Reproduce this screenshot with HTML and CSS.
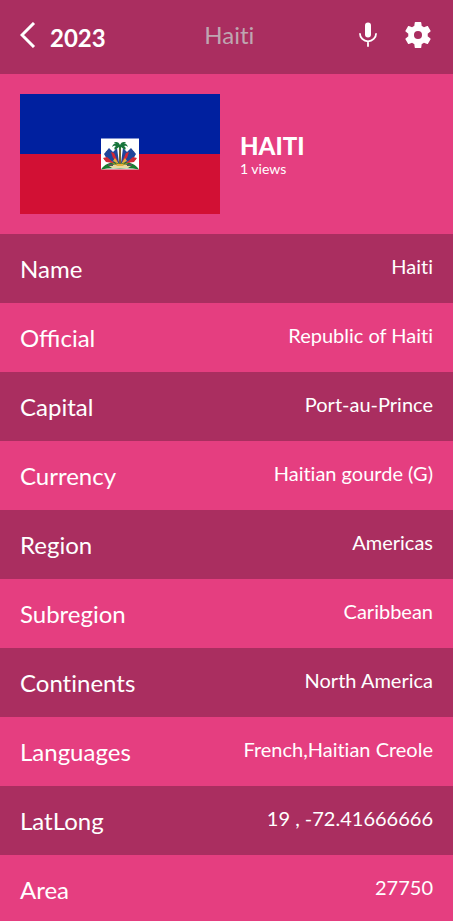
FILE: index.html
```html
<!DOCTYPE html>
<html lang="en">
<head>
<meta charset="utf-8">
<meta name="viewport" content="width=device-width, initial-scale=1">
<title>Haiti</title>
<link rel="stylesheet" href="styles.css">
</head>
<body>
<header class="bar">
  <button class="icon-button" type="button" aria-label="Back">
    <svg class="back" viewBox="0 0 16 26" aria-hidden="true"><path d="M14 1 2 13l12 12"/></svg>
  </button>
  <span class="year">2023</span>
  <input class="search" type="text" placeholder="Haiti" aria-label="Search country">
  <button class="icon-button" type="button" aria-label="Voice search">
    <svg class="mic" viewBox="0 0 18 26" aria-hidden="true"><rect x="6" y="0.5" width="6" height="15" rx="3"/><path d="M0.9 11.2a8.1 8.1 0 0 0 16.2 0M9 19.2v5.5"/></svg>
  </button>
  <button class="icon-button" type="button" aria-label="Settings">
    <svg class="gear" viewBox="2 2 20 20" aria-hidden="true"><path fill-rule="evenodd" d="M19.43 12.98c.04-.32.07-.64.07-.98s-.03-.66-.07-.98l2.11-1.65c.19-.15.24-.42.12-.64l-2-3.46c-.12-.22-.39-.3-.61-.22l-2.49 1c-.52-.4-1.08-.73-1.69-.98l-.38-2.65C14.46 2.18 14.25 2 14 2h-4c-.25 0-.46.18-.49.42l-.38 2.65c-.61.25-1.17.59-1.69.98l-2.49-1c-.23-.09-.49 0-.61.22l-2 3.46c-.13.22-.07.49.12.64l2.11 1.65c-.04.32-.07.65-.07.98s.03.66.07.98l-2.11 1.65c-.19.15-.24.42-.12.64l2 3.46c.12.22.39.3.61.22l2.49-1c.52.4 1.08.73 1.69.98l.38 2.65c.03.24.24.42.49.42h4c.25 0 .46-.18.49-.42l.38-2.65c.61-.25 1.17-.59 1.69-.98l2.49 1c.23.09.49 0 .61-.22l2-3.46c.12-.22.07-.49-.12-.64zM12 15.1a3.1 3.1 0 1 1 0-6.2 3.1 3.1 0 0 1 0 6.2z"/></svg>
  </button>
</header>
<main>
  <section class="hero">
    <svg class="flag" viewBox="0 0 200 120" role="img" aria-label="Flag of Haiti">
      <path fill="#00209f" d="M0 0h200v60H0z"/>
      <path fill="#d21034" d="M0 60h200v60H0z"/>
      <path fill="#fff" d="M81 44.500h38v31H81z"/>
      <path fill="#197b30" d="M81 75.500c3-5 9-8 19-8s16 3 19 8q-9-2-19-1-10-1-19 1z"/>
      <path fill="#e8d9a0" d="M89 72q11-4 22 0l-3 2H92z"/>
      <path stroke="#b58a20" stroke-width="1" d="m86 57 12 14m16-14-12 14M84 65l13 6m19-6-13 6"/>
      <path fill="#20459b" d="m84 60 5-6 4 4 4-4 2 15-11-2zM116 60l-5-6-4 4-4-4-2 15 11-2z"/>
      <path fill="#d02837" d="m83 64 4-1 7 6-8-1zM117 64l-4-1-7 6 8-1zM91 58l3 1 4 9-5-4zM109 58l-3 1-4 9 5-4z"/>
      <path fill="#e3b23c" d="m95 64 4 6-6-3zM105 64l-4 6 6-3zM97 70h6v2h-6z"/>
      <path stroke="#77652d" stroke-width="2" d="M100 52v18"/>
      <path fill="#16743a" d="M100 51c-3-3-7-2-8 2 2-2 4-1 4-1-2 1-2 3-1 4l4-3 1 4 1-4 4 3c1-1 1-3-1-4 0 0 2-1 4 1-1-4-5-5-8-2zM100 51c-2-4-5-3-6-2 2 0 4 1 6 2 2-1 4-2 6-2-1-1-4-2-6 2z"/>
      <path fill="#555" d="M88 70h5v2h-5zM107 70h5v2h-5z"/>
    </svg>
    <div>
      <h1 class="country">HAITI</h1>
      <p class="views">1 views</p>
    </div>
  </section>
  <dl class="facts">
    <div class="fact"><dt>Name</dt><dd>Haiti</dd></div>
    <div class="fact"><dt class="joined">Official</dt><dd>Republic of Haiti</dd></div>
    <div class="fact"><dt>Capital</dt><dd>Port-au-Prince</dd></div>
    <div class="fact"><dt>Currency</dt><dd>Haitian gourde (G)</dd></div>
    <div class="fact"><dt>Region</dt><dd>Americas</dd></div>
    <div class="fact"><dt>Subregion</dt><dd>Caribbean</dd></div>
    <div class="fact"><dt>Continents</dt><dd>North America</dd></div>
    <div class="fact"><dt>Languages</dt><dd>French,Haitian Creole</dd></div>
    <div class="fact"><dt>LatLong</dt><dd>19 , -72.41666666</dd></div>
    <div class="fact"><dt>Area</dt><dd>27750</dd></div>
  </dl>
</main>
</body>
</html>
```
FILE: styles.css
```css
:root {
  --pink: #e53e80;
  --dark: #aa2e60;
}

* {
  box-sizing: border-box;
  margin: 0;
  padding: 0;
}

html {
  scrollbar-width: none;
}

body {
  background: var(--pink);
  color: #fff;
  font-family: Lato, sans-serif;
  font-variant-ligatures: none;
}

.bar {
  display: flex;
  align-items: center;
  height: 74px;
  padding: 0 20px 4px;
  background: var(--dark);
}

.icon-button {
  display: flex;
  flex: none;
  border: 0;
  background: none;
  color: inherit;
}

.back {
  width: 16px;
  height: 26px;
  fill: none;
  stroke: currentColor;
  stroke-width: 3;
}

.year {
  margin-left: 14px;
  padding-top: 6px;
  font-size: 24px;
  font-weight: 700;
  line-height: 30px;
}

.search {
  flex: 1;
  min-width: 0;
  padding-right: 6px;
  border: 0;
  outline: 0;
  background: none;
  color: #fff;
  font: 24px/30px Lato, sans-serif;
  font-variant-ligatures: none;
  text-align: center;
}

.search::placeholder {
  color: #bfa6b1;
  opacity: 1;
}

.mic {
  width: 18px;
  height: 26px;
  fill: none;
  stroke: currentColor;
  stroke-width: 1.8;
}

.mic rect {
  fill: currentColor;
  stroke: none;
}

.gear {
  width: 26px;
  height: 26px;
  margin-left: 28px;
  margin-right: 2px;
  fill: currentColor;
}

.hero {
  display: flex;
  align-items: center;
  gap: 20px;
  padding: 20px;
}

.flag {
  flex: none;
  width: 200px;
  height: 120px;
}

.country {
  font-size: 24px;
  font-weight: 900;
  line-height: 29px;
}

.views {
  font-size: 14px;
  line-height: 17px;
}

.fact {
  display: flex;
  justify-content: space-between;
  gap: 20px;
  padding: 20px;
}

.fact:nth-child(odd) {
  background: var(--dark);
}

.fact dt {
  font-size: 24px;
  line-height: 29px;
}

.fact .joined {
  font-variant-ligatures: normal;
}

.fact dd {
  font-size: 20px;
  line-height: 24px;
  text-align: right;
}
```
